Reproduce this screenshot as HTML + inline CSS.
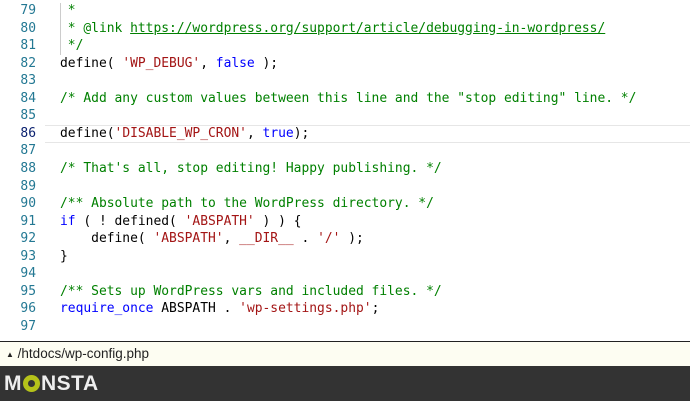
<!DOCTYPE html>
<html><head><meta charset="utf-8"><style>
body{margin:0;width:690px;height:401px;overflow:hidden;background:#fff;font-family:"DejaVu Sans Mono","Liberation Mono",monospace;}
#ed{position:absolute;left:0;top:0;width:690px;height:341px;}
.l{position:absolute;left:0;height:17.55px;line-height:17.55px;font-size:12.95px;white-space:pre;width:690px}
.n{position:absolute;right:654px;color:#237893;}
.c{position:absolute;left:60px;color:#000}
.cm{color:#008000}.s{color:#a31515}.k{color:#0000ff}
.cur{position:absolute;left:45px;top:125px;width:645px;height:16px;border-top:1px solid #e6e6e6;border-bottom:1px solid #e6e6e6}
#sb{position:absolute;left:0;top:341px;width:690px;height:24px;border-top:1px solid #222;background:#fdfdf2;font-family:"Liberation Sans",sans-serif;font-size:13.5px;line-height:24px;color:#222}
#ft{position:absolute;left:0;top:366px;width:690px;height:35px;background:#333;}
</style></head><body>
<div id="ed">
<div class="cur"></div>
<div style="position:absolute;left:60px;top:3px;width:1px;height:52px;background:#ccc"></div>
<div class="l" style="top:2px"><span class="n">79</span><span class="c cm"> *</span></div>
<div class="l" style="top:19.5px"><span class="n">80</span><span class="c cm"> * @link <u>https://wordpress.org/support/article/debugging-in-wordpress/</u></span></div>
<div class="l" style="top:37px"><span class="n">81</span><span class="c cm"> */</span></div>
<div class="l" style="top:54.6px"><span class="n">82</span><span class="c">define( <span class="s">'WP_DEBUG'</span>, <span class="k">false</span> );</span></div>
<div class="l" style="top:72.2px"><span class="n">83</span></div>
<div class="l" style="top:89.7px"><span class="n">84</span><span class="c cm">/* Add any custom values between this line and the "stop editing" line. */</span></div>
<div class="l" style="top:107.3px"><span class="n">85</span></div>
<div class="l" style="top:124.8px"><span class="n" style="color:#0b216f">86</span><span class="c">define(<span class="s">'DISABLE_WP_CRON'</span>, <span class="k">true</span>);</span></div>
<div class="l" style="top:142.4px"><span class="n">87</span></div>
<div class="l" style="top:159.9px"><span class="n">88</span><span class="c cm">/* That's all, stop editing! Happy publishing. */</span></div>
<div class="l" style="top:177.5px"><span class="n">89</span></div>
<div class="l" style="top:195px"><span class="n">90</span><span class="c cm">/** Absolute path to the WordPress directory. */</span></div>
<div class="l" style="top:212.6px"><span class="n">91</span><span class="c"><span class="k">if</span> ( ! defined( <span class="s">'ABSPATH'</span> ) ) {</span></div>
<div class="l" style="top:230.1px"><span class="n">92</span><span class="c">    define( <span class="s">'ABSPATH'</span>, <span class="s">__DIR__</span> . <span class="s">'/'</span> );</span></div>
<div class="l" style="top:247.7px"><span class="n">93</span><span class="c">}</span></div>
<div class="l" style="top:265.2px"><span class="n">94</span></div>
<div class="l" style="top:282.8px"><span class="n">95</span><span class="c cm">/** Sets up WordPress vars and included files. */</span></div>
<div class="l" style="top:300.3px"><span class="n">96</span><span class="c"><span class="k">require_once</span> ABSPATH . <span class="s">'wp-settings.php'</span>;</span></div>
<div class="l" style="top:317.9px"><span class="n">97</span></div>
</div>
<div id="sb"><span style="font-size:8px;margin-left:6px;vertical-align:1px">▲</span> /htdocs/wp-config.php</div>
<div id="ft">
<div style="position:absolute;left:4px;top:6px;font-family:'Liberation Sans',sans-serif;font-weight:bold;font-size:21px;color:#eee;letter-spacing:0.5px;line-height:24px">M<span style="display:inline-block;width:17px;height:17px;border-radius:50%;background:#b5c21a;vertical-align:-2px;position:relative;margin:0 1px"><span style="position:absolute;left:5px;top:5px;width:7px;height:7px;border-radius:50%;background:#333"></span></span>NSTA</div>
</div>
</body></html>
